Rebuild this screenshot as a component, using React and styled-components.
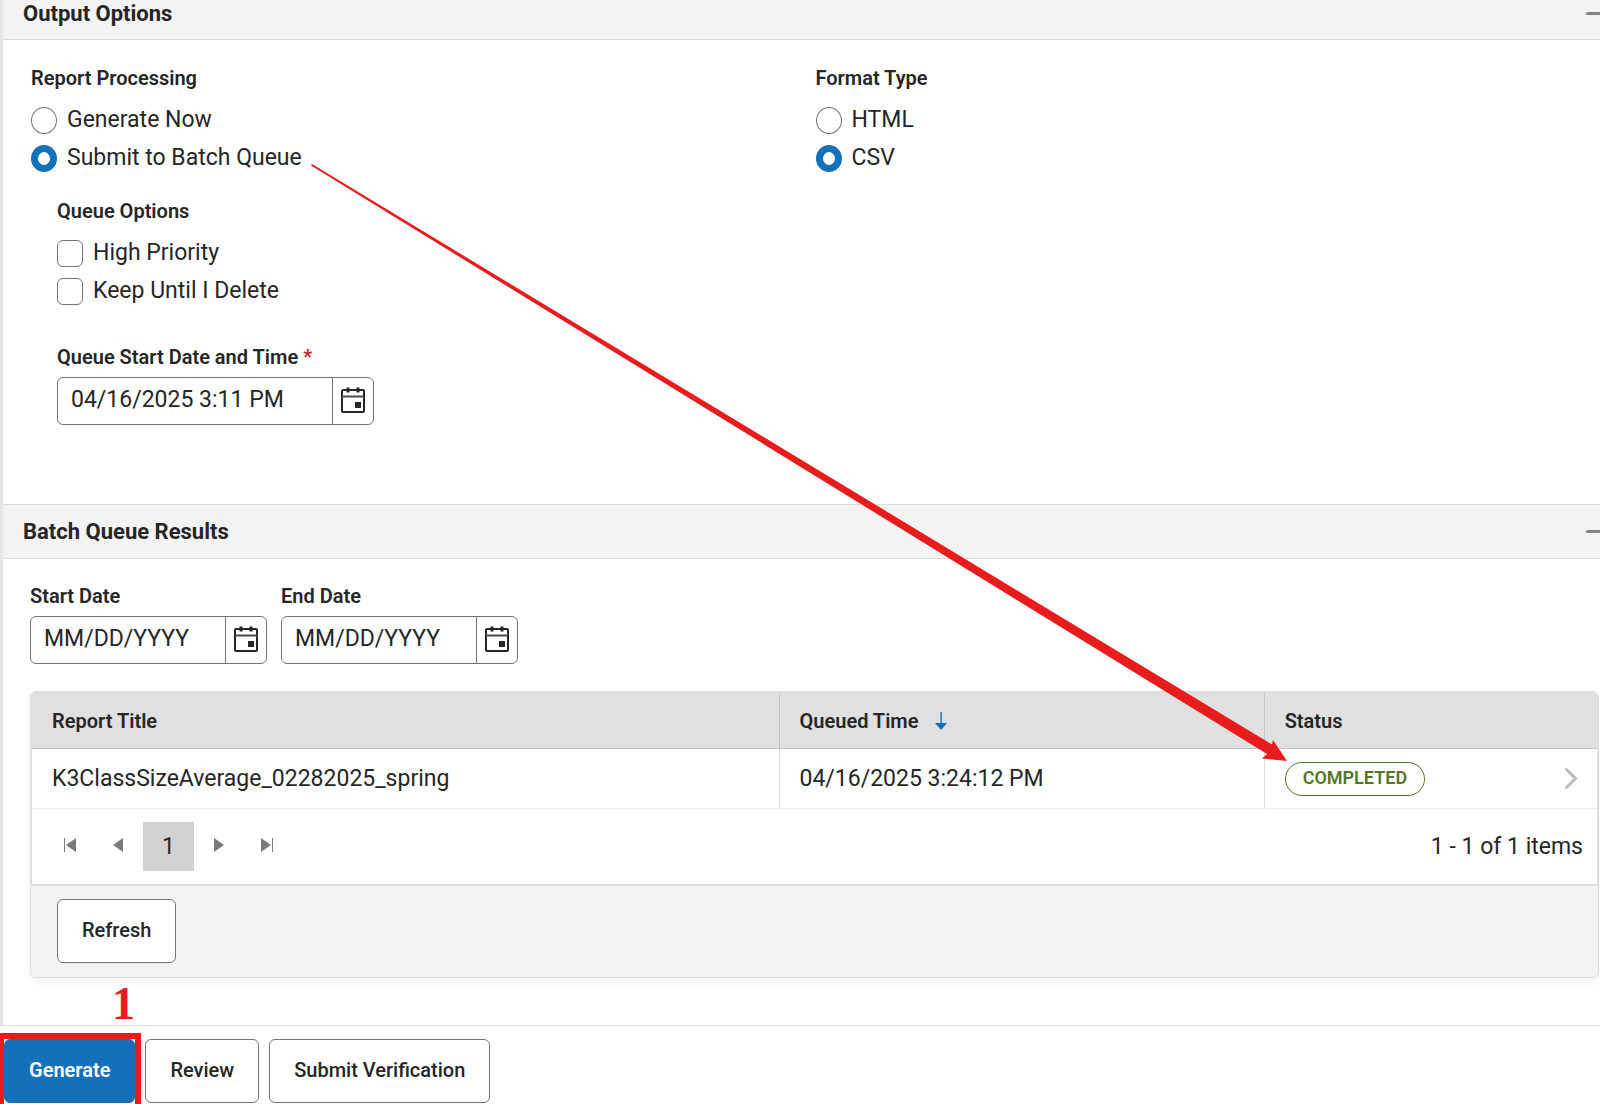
import React, { useState } from 'react';
import styled, { createGlobalStyle, css } from 'styled-components';

const GlobalStyle = createGlobalStyle`
  *, *::before, *::after {
    box-sizing: border-box;
  }

  body {
    margin: 0;
    background: #fff;
    color: #262626;
    font-family: Roboto, 'Liberation Sans', sans-serif;
    font-size: 23px;
    line-height: 28px;
    overflow-x: hidden;
  }

  button, input {
    font: inherit;
    color: inherit;
  }
`;

const PageStyles = styled.div`
  position: relative;
  min-height: 100vh;
  display: flex;
  flex-direction: column;
`;

const Panel = styled.main`
  flex: 1;
  border-left: 3px solid #e6e6e6;
`;

const SectionHeader = styled.header`
  display: flex;
  align-items: center;
  justify-content: space-between;
  height: 55px;
  padding-left: 20px;
  background: #f3f3f3;
  border-top: 1px solid #dedede;
  border-bottom: 1px solid #dedede;
  overflow: hidden;

  ${({ $clipped }) =>
    $clipped &&
    css`
      height: 40px;
      padding-bottom: 12px;
      border-top: 0;
    `}

  h2 {
    margin: 0;
    font-size: 22px;
    font-weight: 700;
  }
`;

const CollapseButton = styled.button`
  width: 14px;
  height: 24px;
  padding: 0;
  border: 0;
  background: none;
  overflow: hidden;

  svg {
    display: block;
  }
`;

const OptionsBody = styled.div`
  display: grid;
  grid-template-columns: 1fr 1fr;
  padding: 24px 0 79px 28px;
`;

const Group = styled.fieldset`
  min-width: 0;
  margin: 0;
  padding: 0;
  border: 0;

  legend {
    padding: 0;
    margin-bottom: 14px;
    font-size: 20px;
    font-weight: 600;
  }
`;

const QueueOptions = styled.div`
  padding: 15px 0 0 26px;
`;

const Choice = styled.label`
  display: flex;
  align-items: center;
  gap: 10px;
  height: 28px;
  margin-bottom: 10px;

  input {
    appearance: none;
    width: 26px;
    height: 27px;
    margin: 0;
    background: #fff;
    border: 1px solid #757575;
    border-radius: 6px;
  }

  input[type='radio'] {
    border-radius: 50%;
  }

  input[type='radio']:checked {
    border: 7px solid #1470b8;
  }

  input[type='checkbox']:checked {
    background: #1470b8;
  }
`;

const Field = styled.div`
  label {
    display: block;
    margin-bottom: 8px;
    font-size: 20px;
    line-height: 24px;
    font-weight: 600;
  }

  label span {
    color: #c0272d;
  }
`;

const DateBox = styled.div`
  display: flex;
  width: ${({ $wide }) => ($wide ? 317 : 237)}px;
  height: 48px;
  border: 1px solid #757575;
  border-radius: 6px;
  background: #fff;

  input {
    flex: 1;
    min-width: 0;
    padding: 0 0 2px 13px;
    border: 0;
    outline: 0;
    background: none;
  }

  input::placeholder {
    color: #262626;
    opacity: 1;
  }

  button {
    display: flex;
    align-items: center;
    justify-content: center;
    width: 41px;
    padding: 0 0 2px;
    border: 0;
    border-left: 1px solid #757575;
    background: none;
  }
`;

const QueueStart = styled.div`
  padding-top: 30px;
`;

const Filters = styled.div`
  display: flex;
  gap: 14px;
  margin-bottom: 27px;
`;

const ResultsBody = styled.div`
  padding: 25px 1px 46px 27px;
`;

const Card = styled.div`
  border: 1px solid #dedede;
  border-radius: 6px;
  background: #f3f3f3;
  box-shadow: 0 3px 8px rgba(0, 0, 0, 0.06);
  overflow: hidden;
`;

const Grid = styled.div`
  border: 1px solid #dedede;
  border-bottom-width: 2px;
  background: #fff;
`;

const ResultsTable = styled.table`
  width: 100%;
  border-collapse: separate;
  border-spacing: 0;
  table-layout: fixed;

  th,
  td {
    padding: 0 19px 0 20px;
    text-align: left;
    border-left: 1px solid #dedede;
  }

  th {
    height: 56px;
    background: #e0e0e0;
    border-bottom: 1px solid #c4c4c4;
    border-left-color: #c4c4c4;
    font-size: 20px;
    font-weight: 600;
  }

  td {
    height: 60px;
    border-bottom: 1px solid #f0f0f0;
  }

  th:first-child,
  td:first-child {
    border-left: 0;
  }

  th svg {
    margin-left: 16px;
    vertical-align: -2px;
  }
`;

const StatusCell = styled.div`
  display: flex;
  align-items: center;
  justify-content: space-between;
`;

const Badge = styled.span`
  padding: 0 17px 2px;
  border: 1px solid #55752a;
  border-radius: 17px;
  color: #55752a;
  font-size: 18px;
  line-height: 30px;
  font-weight: 600;
`;

const Pager = styled.nav`
  display: flex;
  align-items: center;
  height: 75px;
  padding: 0 14px 0 13px;

  p {
    margin: 0 0 0 auto;
  }
`;

const PagerButton = styled.button`
  display: flex;
  align-items: center;
  justify-content: center;
  width: ${({ $current }) => ($current ? 51 : 49)}px;
  height: 49px;
  padding: 0;
  border: 0;
  background: ${({ $current }) => ($current ? '#d2d2d2' : 'none')};

  svg {
    margin-bottom: 4px;
  }
`;

const CardFooter = styled.div`
  padding: 13px 26px 14px;
`;

const Button = styled.button`
  height: 64px;
  padding: 0 24px 2px;
  border: 1px solid ${({ $primary }) => ($primary ? '#1470b8' : '#757575')};
  border-radius: 6px;
  background: ${({ $primary }) => ($primary ? '#1470b8' : '#fff')};
  color: ${({ $primary }) => ($primary ? '#fff' : '#262626')};
  font-size: 20px;
  font-weight: ${({ $primary }) => ($primary ? 600 : 500)};
`;

const ActionBar = styled.footer`
  display: flex;
  gap: 10px;
  padding: 13px 4px 1px;
  border-top: 1px solid #dedede;
  background: #fff;
`;

const Highlight = styled.div`
  position: relative;

  &::after {
    content: '';
    position: absolute;
    inset: -6px -6px -8px -6px;
    border: 6px solid #e81c1c;
    pointer-events: none;
  }
`;

const StepNumber = styled.span`
  position: absolute;
  left: 108px;
  bottom: 76px;
  color: #e81c1c;
  font-family: 'Liberation Serif', serif;
  font-size: 46px;
  line-height: 46px;
  font-weight: 700;
`;

const Pointer = styled.svg`
  position: absolute;
  top: 0;
  left: 0;
  pointer-events: none;
`;

function CalendarIcon() {
  return (
    <svg width="24" height="26" viewBox="0 0 24 26" fill="none" aria-hidden="true">
      <rect x="1" y="3" width="22" height="22" rx="1" stroke="#262626" strokeWidth="2" />
      <path d="M1 9.5h22" stroke="#4a4a4a" strokeWidth="2" />
      <path d="M7 0.5v5M17 0.5v5" stroke="#262626" strokeWidth="3" />
      <path d="M14 15h6v6h-6z" fill="#262626" />
    </svg>
  );
}

function DateField({ id, label, required, value, wide }) {
  return (
    <Field>
      <label htmlFor={id}>
        {label} {required && <span>*</span>}
      </label>
      <DateBox $wide={wide}>
        <input id={id} type="text" placeholder="MM/DD/YYYY" defaultValue={value} />
        <button type="button" aria-label={`Open calendar for ${label}`}>
          <CalendarIcon />
        </button>
      </DateBox>
    </Field>
  );
}

function RadioGroup({ name, legend, options, initial }) {
  const [selected, setSelected] = useState(initial);
  return (
    <Group>
      <legend>{legend}</legend>
      {options.map((option) => (
        <Choice key={option}>
          <input
            type="radio"
            name={name}
            checked={selected === option}
            onChange={() => setSelected(option)}
          />
          {option}
        </Choice>
      ))}
    </Group>
  );
}

function Section({ title, clipped, children }) {
  return (
    <section>
      <SectionHeader $clipped={clipped}>
        <h2>{title}</h2>
        <CollapseButton type="button" aria-label={`Collapse ${title}`}>
          <svg width="24" height="24" viewBox="0 0 24 24">
            <path d="M1.5 11.5H23" stroke="#858585" strokeWidth="3" strokeLinecap="round" />
          </svg>
        </CollapseButton>
      </SectionHeader>
      {children}
    </section>
  );
}

const pagerIcons = {
  first: 'M1 0h1v14H1zM13 0v14L3 7z',
  previous: 'M11 0v14L1 7z',
  next: 'M2 0v14L12 7z',
  last: 'M11 0h1v14h-1zM0 0v14L10 7z',
};

function PagerArrow({ to }) {
  return (
    <PagerButton type="button" aria-label={`Go to ${to} page`}>
      <svg width="13" height="14" viewBox="0 0 13 14" fill="#7a7a7a">
        <path d={pagerIcons[to]} />
      </svg>
    </PagerButton>
  );
}

const rows = [
  {
    title: 'K3ClassSizeAverage_02282025_spring',
    queued: '04/16/2025 3:24:12 PM',
    status: 'COMPLETED',
  },
];

const TitleCol = styled.col`
  width: 47.7%;
`;

const QueuedCol = styled.col`
  width: 31%;
`;

export default function App() {
  return (
    <PageStyles>
      <GlobalStyle />
      <Panel>
        <Section title="Output Options" clipped>
          <OptionsBody>
            <div>
              <RadioGroup
                name="processing"
                legend="Report Processing"
                options={['Generate Now', 'Submit to Batch Queue']}
                initial="Submit to Batch Queue"
              />
              <QueueOptions>
                <Group>
                  <legend>Queue Options</legend>
                  <Choice>
                    <input type="checkbox" />
                    High Priority
                  </Choice>
                  <Choice>
                    <input type="checkbox" />
                    Keep Until I Delete
                  </Choice>
                </Group>
                <QueueStart>
                  <DateField
                    id="queue-start"
                    label="Queue Start Date and Time"
                    value="04/16/2025 3:11 PM"
                    required
                    wide
                  />
                </QueueStart>
              </QueueOptions>
            </div>
            <RadioGroup
              name="format"
              legend="Format Type"
              options={['HTML', 'CSV']}
              initial="CSV"
            />
          </OptionsBody>
        </Section>
        <Section title="Batch Queue Results">
          <ResultsBody>
            <Filters>
              <DateField id="start-date" label="Start Date" />
              <DateField id="end-date" label="End Date" />
            </Filters>
            <Card>
              <Grid>
                <ResultsTable>
                  <colgroup>
                    <TitleCol />
                    <QueuedCol />
                    <col />
                  </colgroup>
                  <thead>
                    <tr>
                      <th scope="col">Report Title</th>
                      <th scope="col" aria-sort="descending">
                        Queued Time
                        <svg width="12" height="18" viewBox="0 0 12 18">
                          <path d="M5.4 0h1.4v11H12l-5.9 7L0 11h5.4z" fill="#1470b8" />
                        </svg>
                      </th>
                      <th scope="col">Status</th>
                    </tr>
                  </thead>
                  <tbody>
                    {rows.map((row) => (
                      <tr key={row.title}>
                        <td>{row.title}</td>
                        <td>{row.queued}</td>
                        <td>
                          <StatusCell>
                            <Badge>{row.status}</Badge>
                            <svg width="13" height="21" viewBox="0 0 13 21" fill="none">
                              <path
                                d="M1.5 1.5l9 9-9 9"
                                stroke="#bdbdbd"
                                strokeWidth="3"
                                strokeLinecap="round"
                              />
                            </svg>
                          </StatusCell>
                        </td>
                      </tr>
                    ))}
                  </tbody>
                </ResultsTable>
                <Pager aria-label="Results pages">
                  <PagerArrow to="first" />
                  <PagerArrow to="previous" />
                  <PagerButton type="button" aria-current="page" $current>
                    1
                  </PagerButton>
                  <PagerArrow to="next" />
                  <PagerArrow to="last" />
                  <p>1 - 1 of 1 items</p>
                </Pager>
              </Grid>
              <CardFooter>
                <Button type="button">Refresh</Button>
              </CardFooter>
            </Card>
          </ResultsBody>
        </Section>
      </Panel>
      <ActionBar>
        <Highlight>
          <Button type="button" $primary>
            Generate
          </Button>
          <StepNumber>1</StepNumber>
        </Highlight>
        <Button type="button">Review</Button>
        <Button type="button">Submit Verification</Button>
      </ActionBar>
      <Pointer width="1300" height="780" viewBox="0 0 1300 780" aria-hidden="true">
        <path
          d="M312 164L1272 744.5L1273 740L1287 761L1262 758.5L1267 754L311 165.5Z"
          fill="#e81c1c"
        />
      </Pointer>
    </PageStyles>
  );
}
